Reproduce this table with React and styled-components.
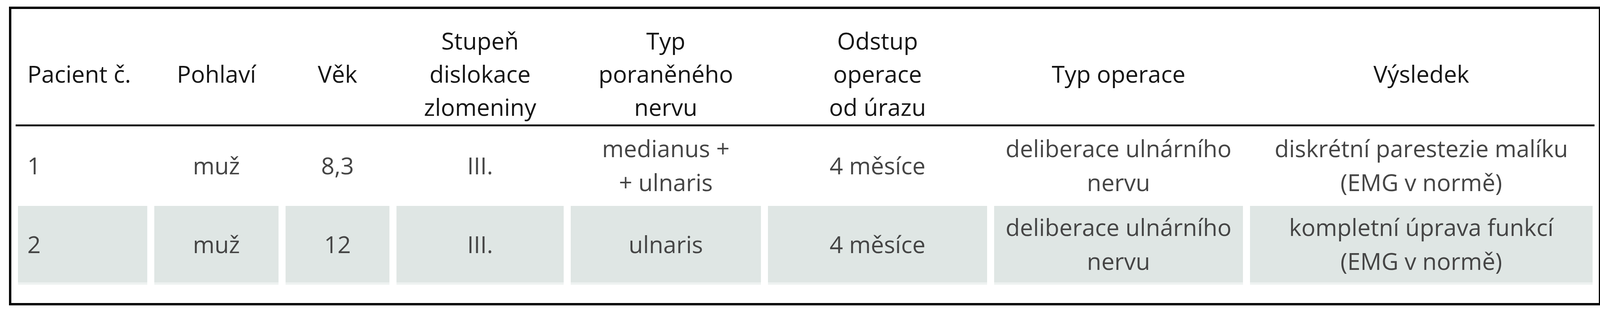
import React from "react";
import styled, { createGlobalStyle } from "styled-components";

const Global = createGlobalStyle`
  html, body { margin: 0; padding: 0; background: #ffffff; }
  body { font-family: "Open Sans", "Noto Sans", sans-serif; }
`;

const COLS = "331px 318px 266px 428px 487px 561px 637px 877px";

const Page = styled.div`
  width: 4116px;
  height: 800px;
  padding: 17px 0 0 23px;
  box-sizing: border-box;
`;

const Frame = styled.div`
  width: 4076px;
  height: 766px;
  box-sizing: border-box;
  border: 6px solid #000;
  display: flex;
  flex-direction: column;
`;

const HeaderRow = styled.div`
  display: grid;
  grid-template-columns: ${COLS};
  column-gap: 18px;
  padding: 36px 16px 0 17px;
  height: 296px;
  box-sizing: border-box;
  align-items: center;
`;

const HeadCell = styled.div`
  font-size: 60px;
  line-height: 85px;
  color: #141414;
  text-align: ${(p) => (p.$left ? "left" : "center")};
  padding-left: ${(p) => (p.$left ? "24px" : "0")};
  white-space: nowrap;
`;

const Rule = styled.div`
  height: 5px;
  margin: 0 11px;
  background: #1c1c1c;
`;

const Body = styled.div`
  display: flex;
  flex-direction: column;
  padding-top: 2px;
`;

const Row = styled.div`
  display: grid;
  grid-template-columns: ${COLS};
  column-gap: 18px;
  padding: 0 16px 0 17px;
`;

const Cell = styled.div`
  height: 202px;
  box-sizing: border-box;
  display: flex;
  align-items: center;
  justify-content: ${(p) => (p.$left ? "flex-start" : "center")};
  padding-left: ${(p) => (p.$left ? "24px" : "0")};
  text-align: ${(p) => (p.$left ? "left" : "center")};
  background: ${(p) => (p.$shaded ? "#dfe6e4" : "transparent")};
  border-bottom: 6px solid ${(p) => (p.$shaded ? "#eef2f1" : "transparent")};
  font-size: 60px;
  line-height: 87px;
  color: #454545;
  white-space: nowrap;
`;

const headers = [
  ["Pacient č."],
  ["Pohlaví"],
  ["Věk"],
  ["Stupeň", "dislokace", "zlomeniny"],
  ["Typ", "poraněného", "nervu"],
  ["Odstup", "operace", "od úrazu"],
  ["Typ operace"],
  ["Výsledek"],
];

const rows = [
  [
    ["1"],
    ["muž"],
    ["8,3"],
    ["III."],
    ["medianus +", "+ ulnaris"],
    ["4 měsíce"],
    ["deliberace ulnárního", "nervu"],
    ["diskrétní parestezie malíku", "(EMG v normě)"],
  ],
  [
    ["2"],
    ["muž"],
    ["12"],
    ["III."],
    ["ulnaris"],
    ["4 měsíce"],
    ["deliberace ulnárního", "nervu"],
    ["kompletní úprava funkcí", "(EMG v normě)"],
  ],
];

const Lines = ({ lines }) => (
  <span>
    {lines.map((l, i) => (
      <React.Fragment key={i}>
        {i > 0 && <br />}
        {l}
      </React.Fragment>
    ))}
  </span>
);

export default function App() {
  return (
    <>
      <Global />
      <Page>
        <Frame>
          <HeaderRow>
            {headers.map((h, i) => (
              <HeadCell key={i} $left={i === 0}>
                <Lines lines={h} />
              </HeadCell>
            ))}
          </HeaderRow>
          <Rule />
          <Body>
            {rows.map((r, ri) => (
              <Row key={ri}>
                {r.map((c, ci) => (
                  <Cell key={ci} $left={ci === 0} $shaded={ri === 1}>
                    <Lines lines={c} />
                  </Cell>
                ))}
              </Row>
            ))}
          </Body>
        </Frame>
      </Page>
    </>
  );
}
